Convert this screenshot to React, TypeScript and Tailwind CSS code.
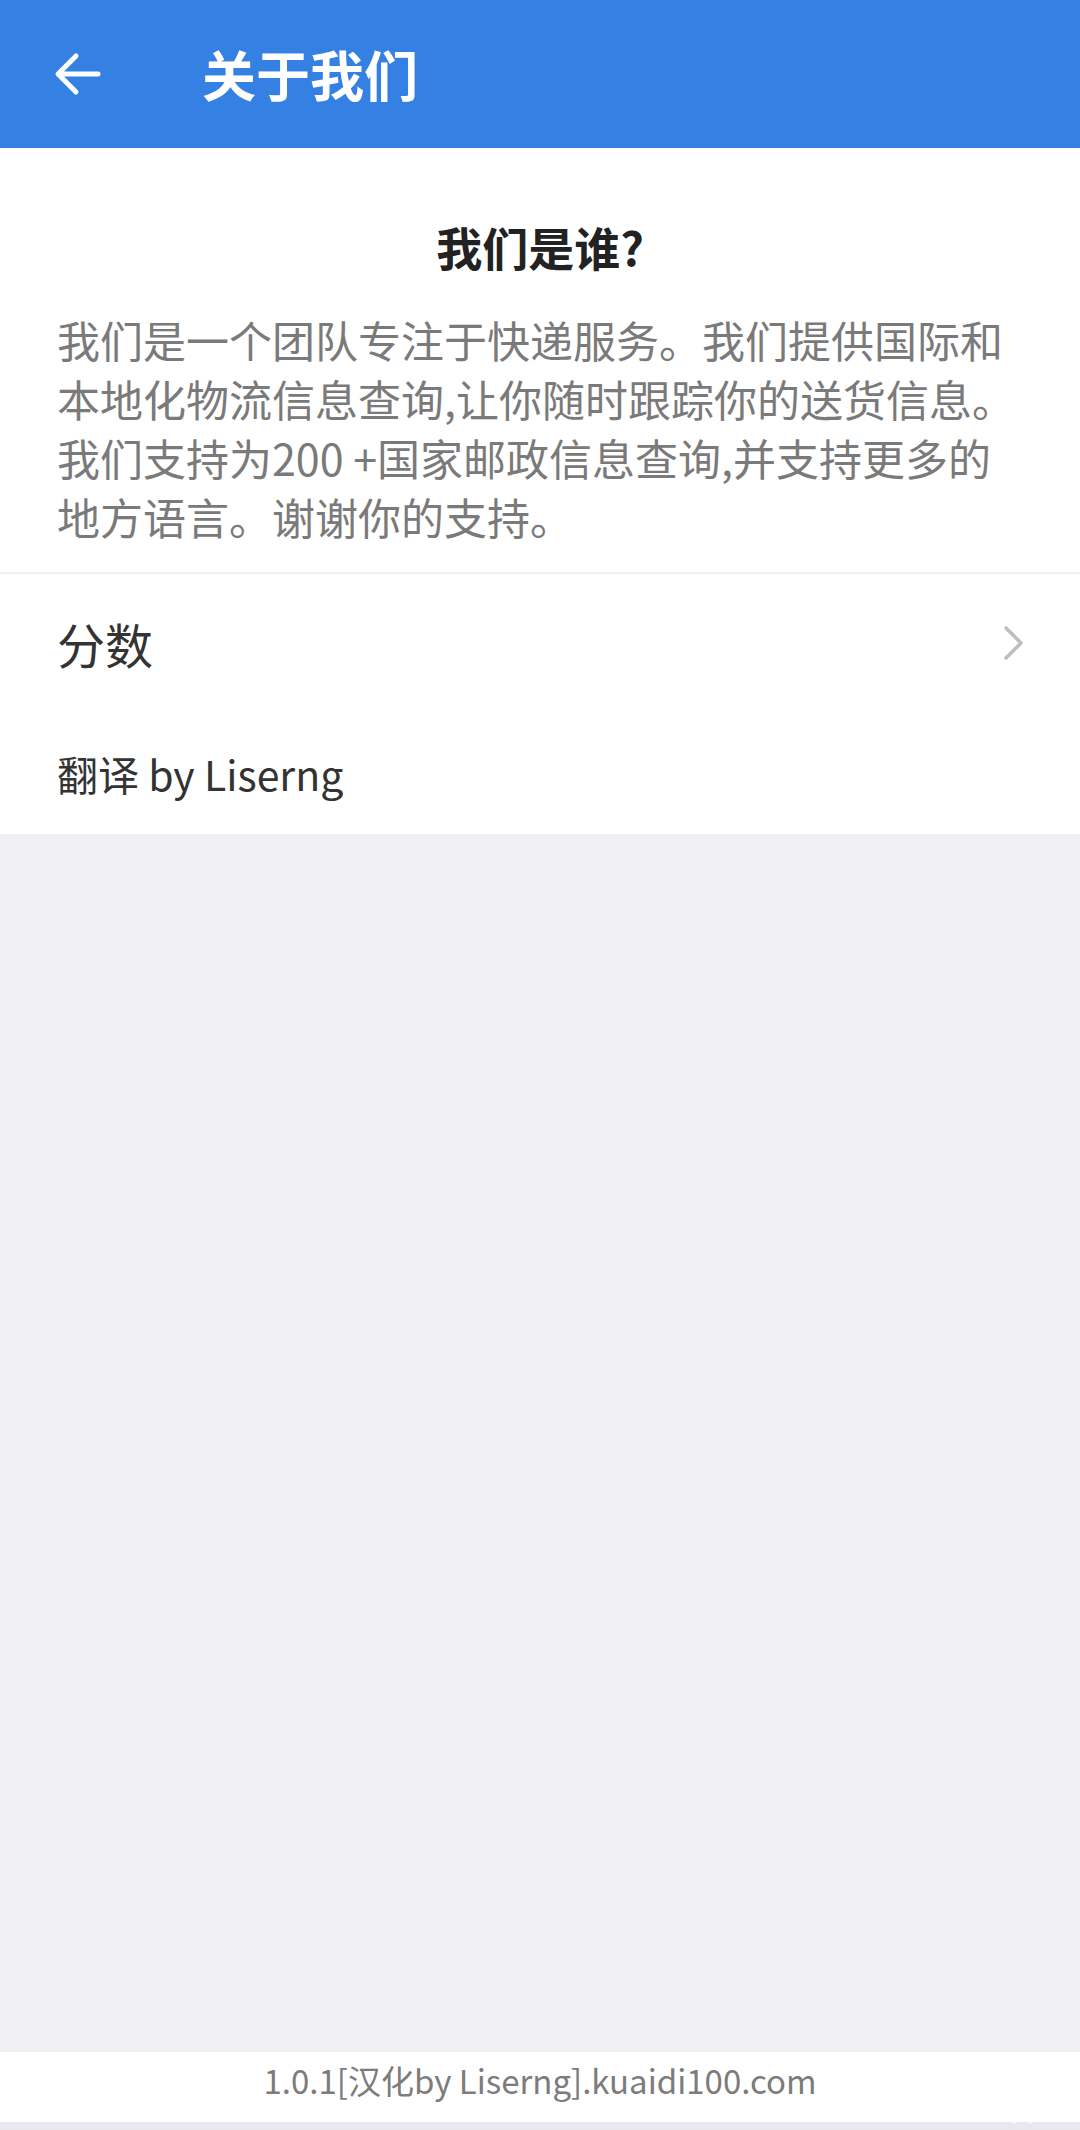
import React from 'react';

const font = { fontFamily: '"Noto Sans CJK SC", "Noto Sans", sans-serif' };

const lines = [
  '我们是一个团队专注于快递服务。我们提供国际和',
  '本地化物流信息查询,让你随时跟踪你的送货信息。',
  '我们支持为200 +国家邮政信息查询,并支持更多的',
  '地方语言。谢谢你的支持。',
];

function BackArrow() {
  return (
    <svg width="48" height="44" viewBox="0 0 48 44" fill="none">
      <path d="M44 22H5M22 4L4 22l18 18" stroke="white" strokeWidth="5" strokeLinecap="round" strokeLinejoin="round" />
    </svg>
  );
}

export default function App() {
  return (
    <div className="flex h-[2130px] w-[1080px] flex-col bg-[#efeff4]" style={font}>
      {/* top bar */}
      <header className="flex h-[148px] shrink-0 items-center bg-[#3481e3] shadow-[0_1px_2px_rgba(0,0,0,0.15)]">
        <div className="ml-[54px] flex w-[148px] items-center">
          <BackArrow />
        </div>
        <h1 className="text-[54px] font-bold leading-none text-white">关于我们</h1>
      </header>

      {/* who we are */}
      <section className="bg-white">
        <div className="px-[57px] pb-[26px] pt-[68px]">
          <h2 className="text-center text-[46px] font-bold leading-[60px] text-[#222]">我们是谁?</h2>
          <p className="mt-[34px] text-[43px] leading-[59px] text-[#7a7a7a]">
            {lines.map((l) => (
              <span key={l} className="block whitespace-nowrap">
                {l}
              </span>
            ))}
          </p>
        </div>
        <div className="h-[2px] bg-[#f2f2f4]" />
        <div className="flex h-[137px] items-center justify-between pl-[57px] pr-[54px]">
          <span className="text-[48px] leading-none text-[#333]">分数</span>
          <svg width="24" height="36" viewBox="0 0 24 36" fill="none">
            <path d="M4 3l15 15L4 33" stroke="#bdbdbd" strokeWidth="3.5" strokeLinecap="round" strokeLinejoin="round" />
          </svg>
        </div>
        <div className="flex h-[123px] items-start pl-[57px] pt-[42px]">
          <span className="text-[41px] leading-none text-[#333]">翻译 by Liserng</span>
        </div>
      </section>

      <div className="flex-1" />

      {/* footer */}
      <footer className="relative flex h-[78px] shrink-0 items-center justify-center border-b-[8px] border-[#e8e8ee] bg-white pb-[14px]">
        <span className="text-[33px] leading-none text-[#7c7c7c]">1.0.1[汉化by Liserng].kuaidi100.com</span>
        <div className="absolute bottom-0 right-[8px] flex flex-col items-center gap-[4px] text-white/80">
          <span className="text-[20px] leading-[24px]">吾爱破解论坛</span>
          <span className="text-[14px] leading-[16px]">www.52pojie.cn</span>
        </div>
      </footer>
    </div>
  );
}
